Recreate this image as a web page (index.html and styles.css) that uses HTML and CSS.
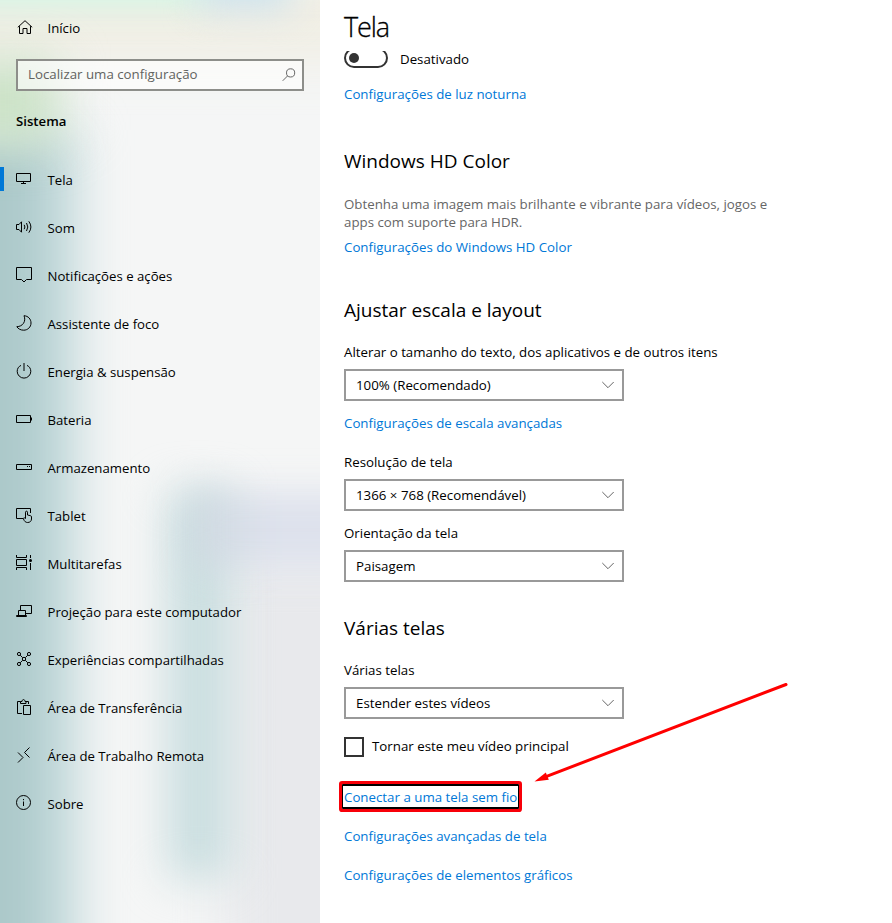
FILE: index.html
```html
<!DOCTYPE html>
<html lang="pt-BR">
<head>
    <meta charset="UTF-8">
    <meta name="viewport" content="width=device-width, initial-scale=1.0">
    <title>Configurações - Tela</title>
    <link rel="stylesheet" href="styles.css">
</head>
<body>
    <div class="window">
        <aside class="sidebar">
            <div class="backdrop">
                <div class="blur right-gray"></div>
                <div class="blur left-teal"></div>
                <div class="blur mid-teal"></div>
                <div class="blur lavender"></div>
                <div class="blur top-cream"></div>
                <div class="blur left-green"></div>
                <div class="blur top-mint"></div>
                <div class="blur top-blue"></div>
            </div>

            <a class="nav-item home">
                <svg class="icon" viewBox="0 0 16 16"><path d="M1.800 8.300 9 1.700l7.200 6.600M3.500 7.200v7.300h3.500V9.500h4v5h3.500V7.200"/></svg>
                <span>Início</span>
            </a>

            <div class="search">
                <span>Localizar uma configuração</span>
                <svg class="search-icon" viewBox="0 0 14 14"><circle cx="8.600" cy="4.900" r="4.100"/><path d="M5.600 7.900.7 12.800"/></svg>
            </div>

            <h2 class="group-title">Sistema</h2>

            <nav class="nav">
                <a class="nav-item active">
                    <svg class="icon" viewBox="0 0 16 16"><path d="M.5 2.500h14v8H.5zM7.500 10.500v2M5 12.500h5"/></svg>
                    <span>Tela</span>
                </a>
                <a class="nav-item">
                    <svg class="icon" viewBox="0 0 16 16"><path d="M.5 5.500H3L5.500 2.800v10.400L3 10.500H.5zM8.200 5.800q1.400 2.200 0 4.400M10.500 4q2.600 4 0 8M12.800 2.300q4.200 5.700 0 11.400"/></svg>
                    <span>Som</span>
                </a>
                <a class="nav-item">
                    <svg class="icon" viewBox="0 0 16 16"><path d="M.5.5h15v12h-5L8 15l-2.500-2.500h-5z"/></svg>
                    <span>Notificações e ações</span>
                </a>
                <a class="nav-item">
                    <svg class="icon" viewBox="0 0 16 16"><path d="M8 .7c4.300.3 7 3.400 7 7.300 0 4.200-3.400 7.200-7.300 7.200-3 0-5.500-1.300-6.900-3.500C6.600 11.600 10.400 6.500 8 .7z"/></svg>
                    <span>Assistente de foco</span>
                </a>
                <a class="nav-item">
                    <svg class="icon" viewBox="0 0 16 16"><path d="M8 0v8M5 2.400C2.600 3.400 1.200 5.700 1.200 8.300a6.800 6.800 0 0 0 13.600 0c0-2.600-1.400-4.900-3.800-5.900"/></svg>
                    <span>Energia &amp; suspensão</span>
                </a>
                <a class="nav-item">
                    <svg class="icon" viewBox="0 0 16 16"><path d="M.5 4.500h14v7H.5zM15.500 6.500v3"/></svg>
                    <span>Bateria</span>
                </a>
                <a class="nav-item">
                    <svg class="icon" viewBox="0 0 16 16"><path d="M.5 5.500h15v5H.5zM11 7.500h1M13 7.500h1"/></svg>
                    <span>Armazenamento</span>
                </a>
                <a class="nav-item">
                    <svg class="icon" viewBox="0 0 16 16"><path d="M7 11.500H.5v-10h14V6M9.500 11.500V5.200c0-1.400 2-1.400 2 0V8l3 .7c.8.200 1 .7 1 1.300v2c0 2-1.500 3.500-3.800 3.500-2.200 0-3.300-1.200-4.200-3.500-.4-1.200.7-1.700 2-.5"/></svg>
                    <span>Tablet</span>
                </a>
                <a class="nav-item">
                    <svg class="icon" viewBox="0 0 16 16"><path d="M.5 0v2.500h10V0M.5 4.500h10v6H.5zM.5 15v-2.500h10V15M14.500 0v3M14.500 8v7"/><circle class="dot" cx="14.500" cy="5.500" r="1.500"/></svg>
                    <span>Multitarefas</span>
                </a>
                <a class="nav-item">
                    <svg class="icon" viewBox="0 0 16 16"><path d="M4.500 7V2.500h11v8H10M2.500 12V7.500h7V12M.5 13.500v-1h10v1z"/></svg>
                    <span>Projeção para este computador</span>
                </a>
                <a class="nav-item">
                    <svg class="icon" viewBox="0 0 16 16"><circle cx="3" cy="3" r="1.600"/><circle cx="13" cy="3" r="1.600"/><circle cx="3" cy="13" r="1.600"/><circle cx="13" cy="13" r="1.600"/><circle cx="8" cy="8" r="1.700"/><path d="m4.200 4.200 2.500 2.500M11.800 4.200 9.300 6.700M4.200 11.800l2.500-2.500M11.800 11.800 9.300 9.300"/></svg>
                    <span>Experiências compartilhadas</span>
                </a>
                <a class="nav-item">
                    <svg class="icon" viewBox="0 0 16 16"><path d="M6 14.500H1.500v-12h3M9.500 2.500h3V5M4.500 4.500v-2h1.500c0-2.600 3-2.600 3 0h1v2zM7.500 6.500h7v9h-7z"/></svg>
                    <span>Área de Transferência</span>
                </a>
                <a class="nav-item">
                    <svg class="icon" viewBox="0 0 16 16"><path d="m2 5.500 5 5L2 15.500M13.500.5l-5 5 5 5"/></svg>
                    <span>Área de Trabalho Remota</span>
                </a>
                <a class="nav-item">
                    <svg class="icon" viewBox="0 0 16 16"><circle cx="7.500" cy="7.500" r="7"/><path d="M7.500 6.500V11M7.500 4v1.200"/></svg>
                    <span>Sobre</span>
                </a>
            </nav>
        </aside>

        <main class="content">
            <h1>Tela</h1>

            <div class="scroll-area">
                <div class="toggle-row">
                    <div class="toggle"></div>
                    <span>Desativado</span>
                </div>
                <a class="link night-link">Configurações de luz noturna</a>

                <section class="section hd-color">
                    <h2>Windows HD Color</h2>
                    <p>Obtenha uma imagem mais brilhante e vibrante para vídeos, jogos e<br>apps com suporte para HDR.</p>
                    <a class="link">Configurações do Windows HD Color</a>
                </section>

                <section class="section scale">
                    <h2>Ajustar escala e layout</h2>
                    <label>Alterar o tamanho do texto, dos aplicativos e de outros itens</label>
                    <div class="select">
                        <span>100% (Recomendado)</span>
                        <svg class="chevron" viewBox="0 0 12 8"><path d="m.3 1 5.700 5.700L11.700 1"/></svg>
                    </div>
                    <a class="link scale-link">Configurações de escala avançadas</a>
                    <label>Resolução de tela</label>
                    <div class="select">
                        <span>1366 × 768 (Recomendável)</span>
                        <svg class="chevron" viewBox="0 0 12 8"><path d="m.3 1 5.700 5.700L11.700 1"/></svg>
                    </div>
                    <label class="orientation">Orientação da tela</label>
                    <div class="select">
                        <span>Paisagem</span>
                        <svg class="chevron" viewBox="0 0 12 8"><path d="m.3 1 5.700 5.700L11.700 1"/></svg>
                    </div>
                </section>

                <section class="section displays">
                    <h2>Várias telas</h2>
                    <label>Várias telas</label>
                    <div class="select">
                        <span>Estender estes vídeos</span>
                        <svg class="chevron" viewBox="0 0 12 8"><path d="m.3 1 5.700 5.700L11.700 1"/></svg>
                    </div>
                    <div class="check-row">
                        <div class="checkbox"></div>
                        <span>Tornar este meu vídeo principal</span>
                    </div>
                    <div class="links">
                        <a class="link focused">Conectar a uma tela sem fio</a>
                        <a class="link">Configurações avançadas de tela</a>
                        <a class="link">Configurações de elementos gráficos</a>
                    </div>
                </section>
            </div>

            <svg class="arrow" viewBox="0 0 260 104">
                <path class="arrow-line" d="M252 4.500 12 96.600"/>
                <path class="arrow-head" d="M.5 101.500 11.800 92.500l3 7.300z"/>
            </svg>
        </main>
    </div>
</body>
</html>
```

FILE: styles.css
```css
* {
    margin: 0;
    padding: 0;
    box-sizing: border-box;
}

body {
    font-family: 'Open Sans', 'Noto Sans', sans-serif;
    font-size: 13.3px;
    line-height: 20px;
    color: #000;
    background: #fff;
}

.window {
    display: flex;
    height: 923px;
    overflow: hidden;
}

/* sidebar */
.sidebar {
    position: relative;
    width: 320px;
    flex: none;
    background: #f5f6f6;
}

.sidebar > * {
    position: relative;
}

.sidebar .backdrop {
    position: absolute;
    top: 0;
    left: 0;
    width: 320px;
    height: 923px;
    overflow: hidden;
}

.blur {
    position: absolute;
    filter: blur(24px);
}

.top-mint {
    left: -60px;
    top: -60px;
    width: 270px;
    height: 65px;
    background: #d2f5e4;
    filter: blur(16px);
}

.top-blue {
    left: 200px;
    top: -60px;
    width: 90px;
    height: 68px;
    background: #cbe2ee;
    filter: blur(18px);
}

.top-cream {
    left: -60px;
    top: -30px;
    width: 440px;
    height: 92px;
    background: #f0eee4;
}

.left-green {
    left: -60px;
    top: 60px;
    width: 118px;
    height: 84px;
    background: #cbe2c6;
}

.left-teal {
    left: -60px;
    top: 130px;
    width: 138px;
    height: 880px;
    background: linear-gradient(90deg, #aac7c8 70px, #c6dddf 138px);
}

.mid-teal {
    left: 168px;
    top: 492px;
    width: 62px;
    height: 386px;
    background: #c8dddf;
    filter: blur(22px);
}

.lavender {
    left: 190px;
    top: 492px;
    width: 200px;
    height: 76px;
    background: linear-gradient(90deg, #ccd8df, #dde1ec 80px);
    filter: blur(18px);
}

.right-gray {
    left: 225px;
    top: 560px;
    width: 180px;
    height: 430px;
    background: #e8e9ec;
}

.nav-item {
    display: flex;
    align-items: center;
    height: 48px;
    padding-left: 16px;
    gap: 15.500px;
    font-size: 13.2px;
}

.nav-item .icon {
    margin-top: -2px;
}

.icon {
    width: 16px;
    height: 16px;
    flex: none;
    fill: none;
    stroke: #000;
    overflow: visible;
}

.icon .dot {
    fill: #000;
    stroke: none;
}

.home {
    padding-top: 8px;
}

.search {
    display: flex;
    align-items: center;
    justify-content: space-between;
    width: 288px;
    height: 32px;
    margin: 11px 0 0 16px;
    padding: 0 6px 2px 10px;
    border: 2px solid #8d8e8a;
    background: rgba(255, 255, 255, 0.6);
    color: #62635f;
}

.search-icon {
    width: 14px;
    height: 14px;
    margin-top: 2px;
    fill: none;
    stroke: #666;
}

.group-title {
    margin: 20px 0 0 16px;
    font-size: 13.2px;
    font-weight: 600;
}

.nav {
    padding-top: 25px;
}

.active::before {
    content: '';
    position: absolute;
    left: 0;
    width: 4px;
    height: 24px;
    margin-top: -2px;
    background: #0078d7;
}

/* content */
.content {
    position: relative;
    flex: 1;
    padding: 7px 0 0 24px;
}

h1 {
    height: 41px;
    font-size: 27px;
    font-weight: 300;
    line-height: 40px;
    letter-spacing: -1.1px;
    -webkit-text-stroke: 0.3px #000;
}

.toggle-row {
    display: flex;
    align-items: center;
    gap: 12px;
}

.toggle-row span {
    padding-top: 1px;
    margin-bottom: -1px;
}

/* top of the switch is scrolled under the page title */
.toggle {
    width: 44px;
    height: 20px;
    padding: 3px;
    border: 2px solid #333;
    border-radius: 10px;
    clip-path: inset(3px 0 0 0);
}

.toggle::before {
    content: '';
    display: block;
    width: 10px;
    height: 10px;
    border-radius: 50%;
    background: #333;
}

.link {
    display: block;
    color: #0078d7;
}

.night-link {
    margin-top: 16px;
}

.section h2 {
    font-size: 19px;
    font-weight: 400;
    line-height: 28px;
}

.section label {
    display: block;
    margin-bottom: 7px;
}

.section p {
    margin: 20px 0 6px;
    line-height: 18px;
    color: #666;
}

.hd-color {
    margin-top: 43px;
}

.scale {
    margin-top: 39px;
}

.section h2 + label {
    margin-top: 18px;
}

.select {
    display: flex;
    align-items: center;
    justify-content: space-between;
    width: 280px;
    height: 32px;
    padding: 0 8px 0 10px;
    border: 2px solid #999;
}

.chevron {
    width: 12px;
    height: 8px;
    fill: none;
    stroke: #666;
}

.scale .scale-link {
    margin: 12px 0 19px;
}

.scale .orientation {
    margin-top: 12px;
}

.displays {
    margin-top: 32px;
}

.check-row {
    display: flex;
    gap: 8px;
    margin-top: 18px;
    line-height: 18px;
}

.checkbox {
    width: 20px;
    height: 20px;
    border: 2px solid #333;
}

.links {
    display: flex;
    flex-direction: column;
    align-items: flex-start;
    gap: 19px;
    margin-top: 30px;
}

.focused {
    position: relative;
}

.focused::after {
    content: '';
    position: absolute;
    left: -2px;
    right: -2px;
    top: -3px;
    bottom: -2px;
    border: 2px solid #000;
    border-width: 2px 1px;
    box-shadow: 0 0 0 3px #f80009;
    border-radius: 1px;
}

/* red pointer to the wireless display link */
.arrow {
    position: absolute;
    left: 214px;
    top: 680px;
    width: 260px;
    height: 104px;
}

.arrow-line {
    fill: none;
    stroke: #ff0000;
    stroke-width: 3;
    stroke-linecap: round;
}

.arrow-head {
    fill: #ff0000;
    stroke: none;
}
```
